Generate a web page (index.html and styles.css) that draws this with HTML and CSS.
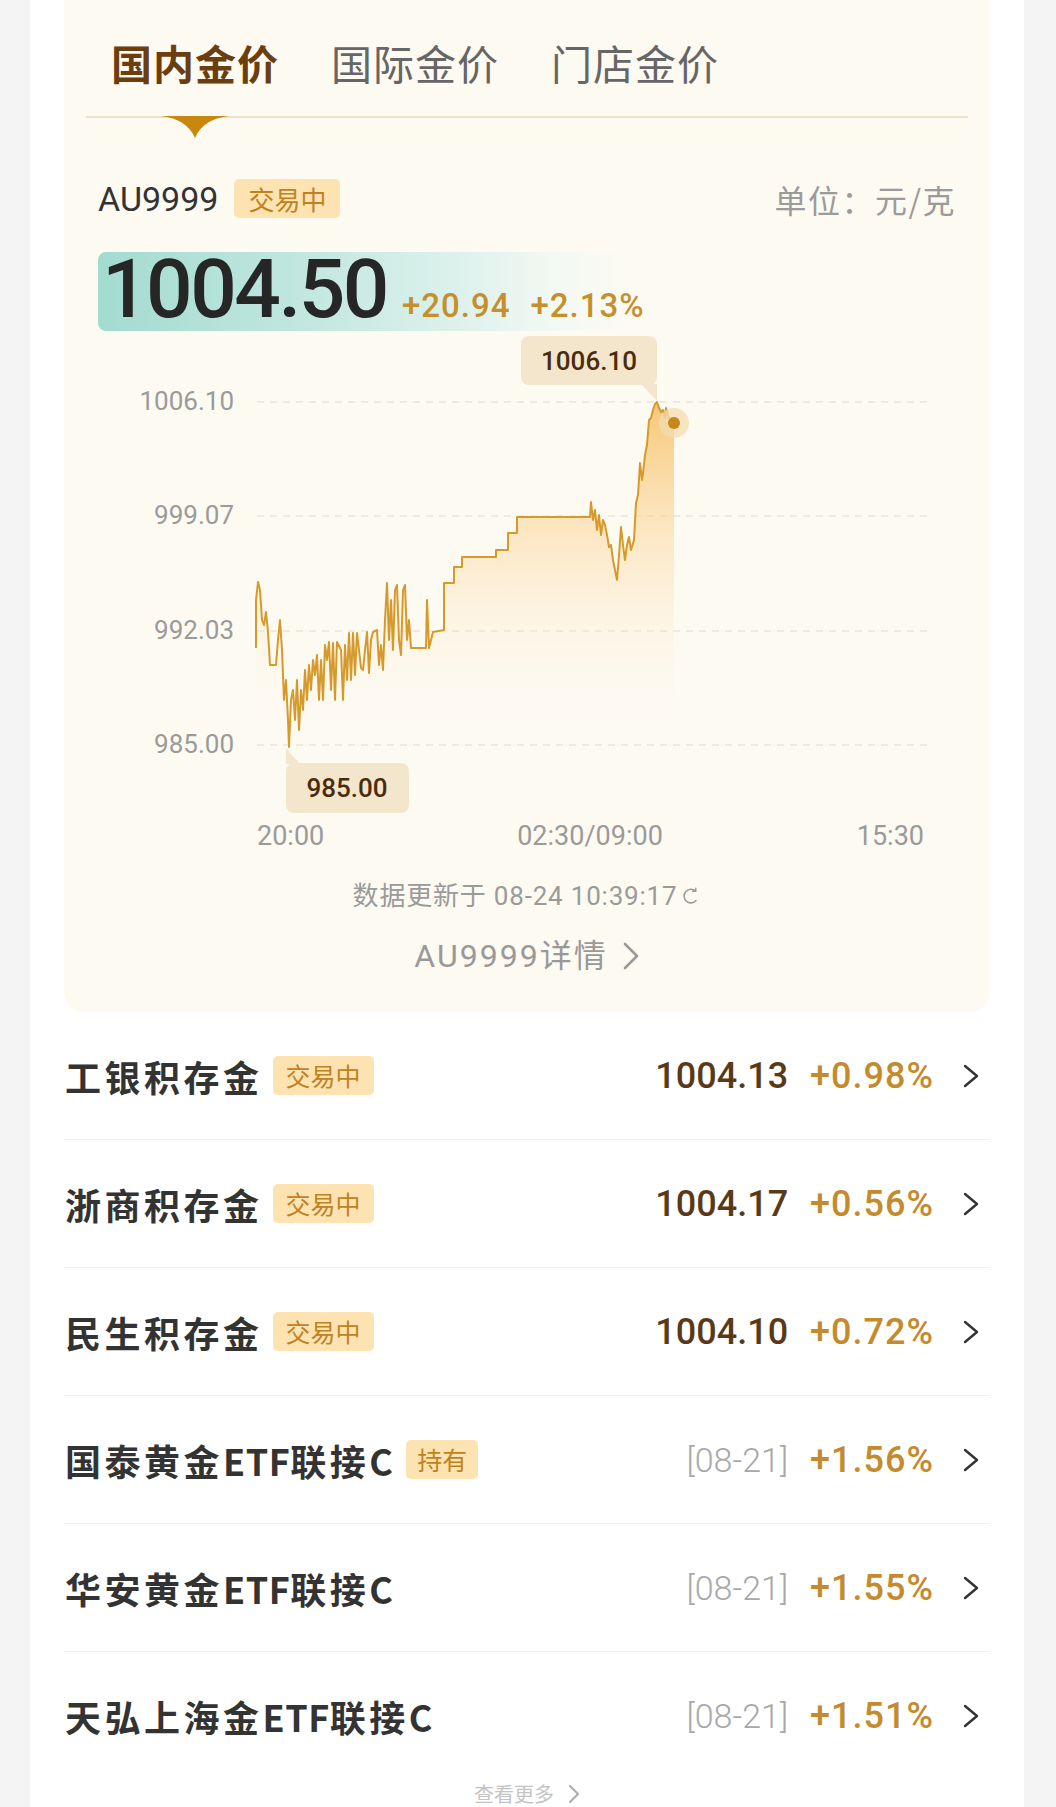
FILE: index.html
```html
<!DOCTYPE html>
<html lang="zh-CN">
<head>
<meta charset="utf-8">
<title>金价</title>
<link rel="stylesheet" href="styles.css">
</head>
<body>
<div class="screen">
  <section class="card">
    <nav class="tabs">
      <div class="tab active">国内金价
        <svg class="tab-pointer" viewBox="0 0 68 22" width="68" height="22"><path d="M0 0 H68 C52 2 40 8 34 22 C28 8 16 2 0 0 Z" fill="#c8870f"/></svg>
      </div>
      <div class="tab">国际金价</div>
      <div class="tab">门店金价</div>
    </nav>
    <div class="quote">
      <div class="meta">
        <div class="meta-left"><span class="code">AU9999</span><span class="badge">交易中</span></div>
        <span class="unit">单位：元/克</span>
      </div>
      <div class="price-bar">
        <span class="price">1004.50</span>
        <span class="chg first">+20.94</span>
        <span class="chg">+2.13%</span>
      </div>
    </div>
    <svg class="chart" width="882" height="534" viewBox="0 0 882 534">
      <defs>
        <linearGradient id="area" gradientUnits="userSpaceOnUse" x1="0" y1="400" x2="0" y2="715">
          <stop offset="0" stop-color="#f6bd5f" stop-opacity="0.85"/>
          <stop offset="0.45" stop-color="#fad79c" stop-opacity="0.5"/>
          <stop offset="1" stop-color="#fff3df" stop-opacity="0"/>
        </linearGradient>
      </defs>
      <g transform="translate(-86,-331)">
        <g class="grid">
          <line x1="257" y1="402" x2="927" y2="402"/>
          <line x1="257" y1="516" x2="927" y2="516"/>
          <line x1="257" y1="631" x2="927" y2="631"/>
          <line x1="257" y1="745" x2="927" y2="745"/>
        </g>
        <g class="ylab">
          <text x="234" y="410">1006.10</text>
          <text x="234" y="524">999.07</text>
          <text x="234" y="639">992.03</text>
          <text x="234" y="753">985.00</text>
        </g>
        <g class="xlab">
          <text x="257" y="845">20:00</text>
          <text x="590" y="845" text-anchor="middle">02:30/09:00</text>
          <text x="924" y="845" text-anchor="end">15:30</text>
        </g>
        <path class="area" d="M256,648 L256,600 L258,582 L260,590 L262,620 L264,625 L266,612 L268,632 L270,665 L276,665 L278,640 L280,620 L282,650 L284,700 L286,680 L288,720 L289,747 L291,700 L293,690 L295,720 L297,680 L299,730 L301,690 L303,710 L305,670 L307,700 L309,665 L311,690 L313,660 L315,675 L317,655 L319,700 L321,660 L323,700 L325,645 L327,660 L329,642 L331,690 L333,643 L335,700 L337,642 L341,650 L343,700 L345,645 L347,680 L349,633 L351,680 L353,633 L355,675 L357,633 L359,650 L361,668 L363,670 L365,650 L367,632 L369,673 L371,640 L373,632 L377,630 L379,665 L381,645 L383,670 L385,620 L387,583 L389,640 L391,600 L393,650 L395,590 L397,585 L399,640 L401,655 L403,590 L405,585 L407,640 L409,620 L411,648 L426,648 L427,600 L429,648 L431,640 L433,632 L444,630 L444,583 L454,583 L454,567 L462,567 L462,557 L496,557 L496,550 L508,550 L508,533 L517,533 L517,517 L590,517 L591,502 L593,520 L595,510 L597,530 L599,515 L601,535 L603,520 L605,525 L607,535 L609,547 L611,545 L613,560 L615,570 L617,580 L619,555 L621,527 L623,545 L625,560 L627,545 L629,537 L631,550 L634,540 L636,503 L638,495 L640,463 L642,480 L643,473 L645,455 L647,445 L649,420 L651,418 L653,410 L655,404 L657,402 L659,408 L661,412 L663,410 L665,418 L666,408 L668,415 L670,420 L672,418 L674,423 L674,760 L256,760 Z"/>
        <path class="line" d="M256,648 L256,600 L258,582 L260,590 L262,620 L264,625 L266,612 L268,632 L270,665 L276,665 L278,640 L280,620 L282,650 L284,700 L286,680 L288,720 L289,747 L291,700 L293,690 L295,720 L297,680 L299,730 L301,690 L303,710 L305,670 L307,700 L309,665 L311,690 L313,660 L315,675 L317,655 L319,700 L321,660 L323,700 L325,645 L327,660 L329,642 L331,690 L333,643 L335,700 L337,642 L341,650 L343,700 L345,645 L347,680 L349,633 L351,680 L353,633 L355,675 L357,633 L359,650 L361,668 L363,670 L365,650 L367,632 L369,673 L371,640 L373,632 L377,630 L379,665 L381,645 L383,670 L385,620 L387,583 L389,640 L391,600 L393,650 L395,590 L397,585 L399,640 L401,655 L403,590 L405,585 L407,640 L409,620 L411,648 L426,648 L427,600 L429,648 L431,640 L433,632 L444,630 L444,583 L454,583 L454,567 L462,567 L462,557 L496,557 L496,550 L508,550 L508,533 L517,533 L517,517 L590,517 L591,502 L593,520 L595,510 L597,530 L599,515 L601,535 L603,520 L605,525 L607,535 L609,547 L611,545 L613,560 L615,570 L617,580 L619,555 L621,527 L623,545 L625,560 L627,545 L629,537 L631,550 L634,540 L636,503 L638,495 L640,463 L642,480 L643,473 L645,455 L647,445 L649,420 L651,418 L653,410 L655,404 L657,402 L659,408 L661,412 L663,410 L665,418 L666,408 L668,415 L670,420 L672,418 L674,423"/>
        <circle cx="674" cy="423" r="15" fill="#f3dcb2" fill-opacity="0.75"/>
        <circle cx="674" cy="423" r="6" fill="#c8861a"/>
        <g class="tip">
          <rect x="521" y="336" width="136" height="49" rx="8"/>
          <polygon points="641,384 657,384 657,401"/>
          <text x="589" y="370" text-anchor="middle">1006.10</text>
        </g>
        <g class="tip">
          <rect x="286" y="763" width="123" height="50" rx="8"/>
          <polygon points="286,748 286,764 300,764"/>
          <text x="347" y="797" text-anchor="middle">985.00</text>
        </g>
      </g>
    </svg>
    <div class="updated">数据更新于 08-24 10:39:17
      <svg width="20" height="20" viewBox="0 0 20 20"><path d="M14.6 5.2 A6.8 6.8 0 1 0 14.9 14.7" fill="none" stroke="#9a9a9a" stroke-width="1.6" stroke-linecap="round"/><path d="M14.8 2.2 L14.7 5.4 L11.6 5.2" fill="none" stroke="#9a9a9a" stroke-width="1.4" stroke-linecap="round" stroke-linejoin="round"/></svg>
    </div>
    <div class="detail">AU9999详情
      <svg class="detail-arrow" width="18" height="28" viewBox="0 0 18 28"><path d="M3 2 L15 14 L3 26" fill="none" stroke="#9a9a9a" stroke-width="2.6" stroke-linecap="round" stroke-linejoin="round"/></svg>
    </div>
  </section>

  <ul class="list">
    <li class="row">
      <span class="name">工银积存金</span><span class="badge">交易中</span>
      <span class="right"><span class="val">1004.13</span><span class="pct">+0.98%</span>
      <svg class="chev" width="18" height="24" viewBox="0 0 18 24"><path d="M3 2 L15 12 L3 22" fill="none" stroke="#333" stroke-width="2.4" stroke-linecap="round" stroke-linejoin="round"/></svg></span>
    </li>
    <li class="row">
      <span class="name">浙商积存金</span><span class="badge">交易中</span>
      <span class="right"><span class="val">1004.17</span><span class="pct">+0.56%</span>
      <svg class="chev" width="18" height="24" viewBox="0 0 18 24"><path d="M3 2 L15 12 L3 22" fill="none" stroke="#333" stroke-width="2.4" stroke-linecap="round" stroke-linejoin="round"/></svg></span>
    </li>
    <li class="row">
      <span class="name">民生积存金</span><span class="badge">交易中</span>
      <span class="right"><span class="val">1004.10</span><span class="pct">+0.72%</span>
      <svg class="chev" width="18" height="24" viewBox="0 0 18 24"><path d="M3 2 L15 12 L3 22" fill="none" stroke="#333" stroke-width="2.4" stroke-linecap="round" stroke-linejoin="round"/></svg></span>
    </li>
    <li class="row">
      <span class="name">国泰黄金<span class="lat">ETF</span>联接<span class="lat">C</span></span><span class="badge small">持有</span>
      <span class="right"><span class="date">[08-21]</span><span class="pct">+1.56%</span>
      <svg class="chev" width="18" height="24" viewBox="0 0 18 24"><path d="M3 2 L15 12 L3 22" fill="none" stroke="#333" stroke-width="2.4" stroke-linecap="round" stroke-linejoin="round"/></svg></span>
    </li>
    <li class="row">
      <span class="name">华安黄金<span class="lat">ETF</span>联接<span class="lat">C</span></span>
      <span class="right"><span class="date">[08-21]</span><span class="pct">+1.55%</span>
      <svg class="chev" width="18" height="24" viewBox="0 0 18 24"><path d="M3 2 L15 12 L3 22" fill="none" stroke="#333" stroke-width="2.4" stroke-linecap="round" stroke-linejoin="round"/></svg></span>
    </li>
    <li class="row">
      <span class="name">天弘上海金<span class="lat">ETF</span>联接<span class="lat">C</span></span>
      <span class="right"><span class="date">[08-21]</span><span class="pct">+1.51%</span>
      <svg class="chev" width="18" height="24" viewBox="0 0 18 24"><path d="M3 2 L15 12 L3 22" fill="none" stroke="#333" stroke-width="2.4" stroke-linecap="round" stroke-linejoin="round"/></svg></span>
    </li>
  </ul>
  <div class="more">查看更多
    <svg width="12" height="20" viewBox="0 0 12 20"><path d="M2 2 L10 10 L2 18" fill="none" stroke="#aaa" stroke-width="2" stroke-linecap="round" stroke-linejoin="round"/></svg>
  </div>
</div>
</body>
</html>
```

FILE: styles.css
```css
html, body {
  margin: 0;
  padding: 0;
}

body {
  background: #f4f4f4;
  font-family: Roboto, "Noto Sans CJK SC", sans-serif;
  color: #333;
}

.screen {
  width: 994px;
  height: 1807px;
  margin-left: 30px;
  padding: 0 34px;
  box-sizing: border-box;
  background: #ffffff;
  overflow: hidden;
}

/* ---------- top card ---------- */
.card {
  background: #fdfaf2;
  border-radius: 0 0 20px 20px;
  padding: 0 22px 36px;
}

.tabs {
  display: flex;
  gap: 52px;
  padding: 34px 0 26px 25px;
  border-bottom: 2px solid #ebe2cb;
}

.tab {
  position: relative;
  font-family: "Noto Sans CJK SC", sans-serif;
  font-size: 41px;
  line-height: 56px;
  letter-spacing: 1px;
  color: #666;
}

.tab.active {
  color: #6b3e10;
  font-weight: 700;
}

.tab-pointer {
  position: absolute;
  left: 50%;
  top: calc(100% + 26px);
  transform: translateX(-50%);
  display: block;
}

.quote {
  padding: 0 12px;
}

.meta {
  display: flex;
  justify-content: space-between;
  align-items: center;
  margin-top: 61px;
  height: 39px;
}

.meta-left {
  display: flex;
  align-items: center;
}

.code {
  font-size: 34px;
  color: #333;
}

.badge {
  display: inline-block;
  background: #fde3b1;
  color: #c0821f;
  font-family: "Noto Sans CJK SC", sans-serif;
  font-size: 25px;
  line-height: 39px;
  height: 39px;
  padding: 0 13px;
  border-radius: 5px;
  margin-left: 10px;
}

.meta .badge {
  font-size: 26px;
  padding: 0 14px;
  margin-left: 16px;
}

.badge.small {
  padding: 0 11px;
  margin-left: 13px;
}

.unit {
  font-family: "Noto Sans CJK SC", sans-serif;
  font-size: 32px;
  letter-spacing: 1.5px;
  color: #9b9b9b;
}

.price-bar {
  display: flex;
  align-items: baseline;
  margin-top: 34px;
  height: 79px;
  width: 548px;
  box-sizing: border-box;
  padding-left: 4px;
  border-radius: 8px;
  background: linear-gradient(90deg, #a3dbd0 0%, #bfe6de 35%, #dcf1ec 65%, rgba(240, 248, 244, 0.6) 85%, rgba(253, 250, 242, 0) 100%);
}

.price {
  font-size: 82px;
  line-height: 74px;
  font-weight: 500;
  letter-spacing: -2.5px;
  color: #262626;
}

.chg {
  font-size: 33px;
  font-weight: 500;
  color: #c58f2d;
  margin-left: 20px;
  letter-spacing: 1px;
}

.chg.first {
  margin-left: 15px;
}

/* ---------- chart ---------- */
.chart {
  display: block;
  font-family: Roboto, sans-serif;
}

.grid line {
  stroke: #ebe5d8;
  stroke-width: 1.5;
  stroke-dasharray: 7 6;
}

.ylab text {
  font-size: 26px;
  fill: #9a9a9a;
  text-anchor: end;
}

.xlab text {
  font-size: 27px;
  fill: #9a9a9a;
}

.area {
  fill: url(#area);
}

.line {
  fill: none;
  stroke: #d69a2c;
  stroke-width: 2;
  stroke-linejoin: round;
}

.tip rect,
.tip polygon {
  fill: #f3e6cc;
}

.tip text {
  font-size: 26px;
  font-weight: 500;
  fill: #4a2c0c;
}

.updated {
  display: flex;
  justify-content: center;
  align-items: center;
  gap: 4px;
  margin-top: 15px;
  font-size: 26px;
  line-height: 32px;
  letter-spacing: 0.8px;
  color: #9a9a9a;
}

.detail {
  display: flex;
  justify-content: center;
  align-items: center;
  margin-top: 24px;
  font-size: 32px;
  line-height: 40px;
  letter-spacing: 2px;
  color: #999;
}

.detail-arrow {
  margin-left: 14px;
}

/* ---------- list ---------- */
.list {
  list-style: none;
  margin: 0;
  padding: 0;
}

.row {
  display: flex;
  align-items: center;
  height: 128px;
  box-sizing: border-box;
  border-bottom: 1px solid #f0f0f0;
  padding: 0 10px 0 1px;
}

.row:last-child {
  border-bottom: none;
}

.name {
  font-family: "Noto Sans CJK SC", sans-serif;
  font-size: 36px;
  font-weight: 700;
  letter-spacing: 3.5px;
  color: #333;
}

.lat {
  letter-spacing: 0.5px;
}

.right {
  margin-left: auto;
  display: flex;
  align-items: center;
}

.val {
  font-size: 36px;
  font-weight: 500;
  color: #5a3a16;
}

.date {
  font-size: 34px;
  font-weight: 300;
  color: #a8a8a8;
}

.pct {
  font-size: 36px;
  font-weight: 500;
  color: #c48a2b;
  letter-spacing: 1px;
  margin-left: 22px;
}

.chev {
  margin-left: 28px;
}

.more {
  display: flex;
  justify-content: center;
  align-items: center;
  gap: 14px;
  padding-top: 3px;
  font-family: "Noto Sans CJK SC", sans-serif;
  font-size: 20px;
  line-height: 22px;
  color: #c4c4c4;
}
```
